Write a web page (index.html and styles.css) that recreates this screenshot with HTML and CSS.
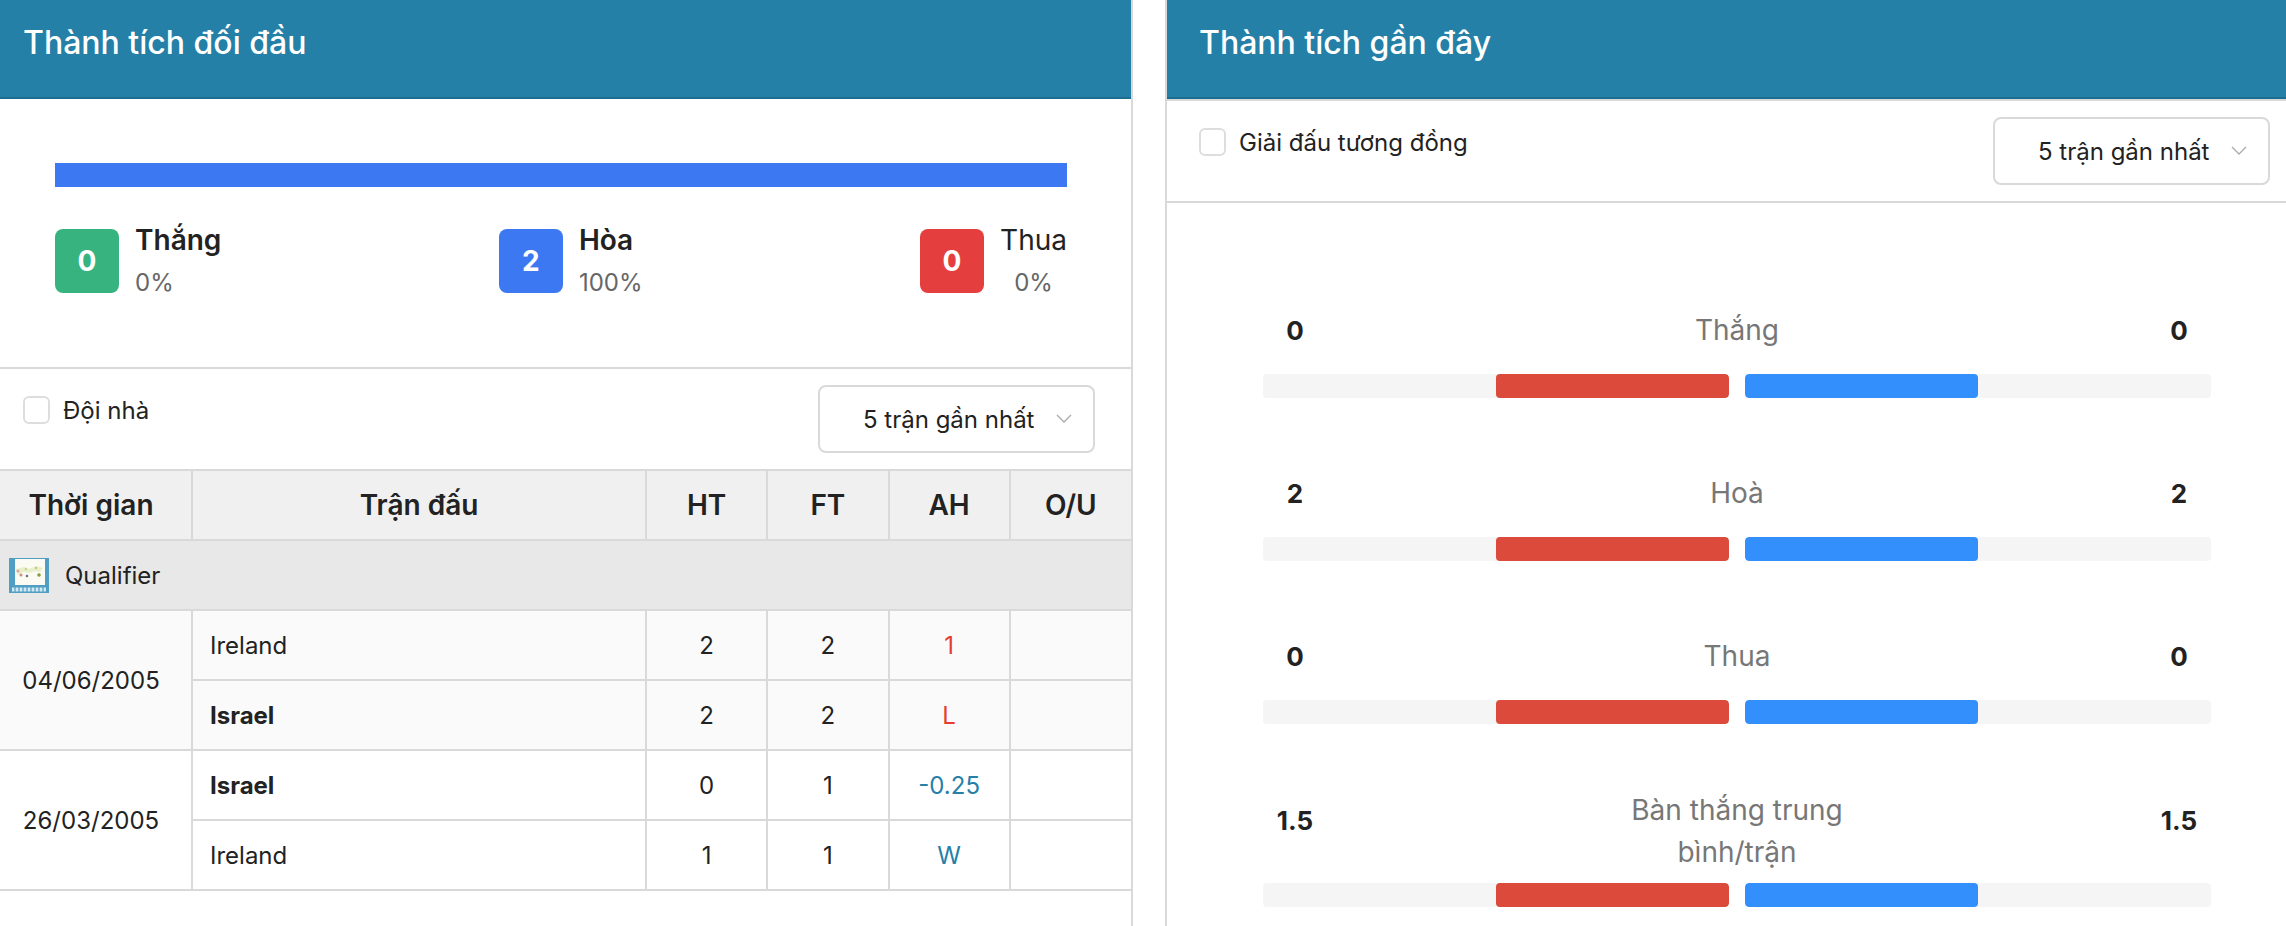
FILE: index.html
```html
<!DOCTYPE html>
<html lang="vi">
<head>
  <meta charset="UTF-8" />
  <meta name="viewport" content="width=device-width, initial-scale=1.0" />
  <title>Thành tích</title>
  <link rel="stylesheet" href="styles.css">
</head>
<body>
  <!-- Head to head -->
  <section class="panel panel-left">
    <h2 class="panel-title">Thành tích đối đầu</h2>
    <div class="summary">
      <div class="summary-bar"></div>
      <div class="summary-items">
        <div class="summary-item">
          <span class="badge badge-win">0</span>
          <div class="summary-text">
            <div class="summary-label">Thắng</div>
            <div class="summary-pct">0%</div>
          </div>
        </div>
        <div class="summary-item">
          <span class="badge badge-draw">2</span>
          <div class="summary-text">
            <div class="summary-label">Hòa</div>
            <div class="summary-pct">100%</div>
          </div>
        </div>
        <div class="summary-item">
          <span class="badge badge-loss">0</span>
          <div class="summary-text summary-text-center">
            <div class="summary-label summary-label-thin">Thua</div>
            <div class="summary-pct">0%</div>
          </div>
        </div>
      </div>
    </div>
    <div class="filters filters-left">
      <label class="check"><span class="check-box"></span>Đội nhà</label>
      <div class="select">
        <span>5 trận gần nhất</span>
        <svg class="chevron" viewBox="0 0 16 10" width="16" height="10"><path d="M1 1 L8 8 L15 1" fill="none" stroke="#aaa" stroke-width="1.3"/></svg>
      </div>
    </div>
    <table class="matches">
      <colgroup>
        <col class="col-date"><col class="col-team"><col class="col-num"><col class="col-num"><col class="col-num"><col class="col-num">
      </colgroup>
      <thead>
        <tr><th>Thời gian</th><th>Trận đấu</th><th>HT</th><th>FT</th><th>AH</th><th>O/U</th></tr>
      </thead>
      <tbody>
        <tr class="group-row">
          <td colspan="6">
            <div class="group">
              <svg class="league-icon" viewBox="0 0 40 35" width="40" height="35">
                <rect width="40" height="35" fill="#4f9fc4"/>
                <rect x="6" y="1" width="30" height="26" fill="#fbfbf4"/>
                <path d="M7 11 L15 9 L20 11 L27 8 L34 10 L31 14 L26 13 L21 15 L15 14 L9 17 Z" fill="#e9efc9"/>
                <circle cx="9" cy="13" r="1.6" fill="#d8a79a"/>
                <circle cx="12" cy="17" r="1.5" fill="#c98f84"/>
                <circle cx="17" cy="11" r="1.3" fill="#c7d79a"/>
                <circle cx="18" cy="18" r="1.3" fill="#5f7480"/>
                <circle cx="30" cy="17" r="1.8" fill="#7fa23a"/>
                <circle cx="27" cy="10" r="1.2" fill="#b9cc8a"/>
                <path d="M3 29.5h34v4h-34z" fill="#d5e8f2"/>
                <path d="M6 29v5M10 29v5M14 29v5M18 29v5M22 29v5M26 29v5M30 29v5M34 29v5" stroke="#4f9fc4" stroke-width="1.2"/>
              </svg>
              <span>Qualifier</span>
            </div>
          </td>
        </tr>
        <tr class="row-alt">
          <td class="date" rowspan="2">04/06/2005</td>
          <td class="team">Ireland</td><td>2</td><td>2</td><td class="ah-loss">1</td><td></td>
        </tr>
        <tr class="row-alt">
          <td class="team team-home">Israel</td><td>2</td><td>2</td><td class="ah-loss">L</td><td></td>
        </tr>
        <tr>
          <td class="date" rowspan="2">26/03/2005</td>
          <td class="team team-home">Israel</td><td>0</td><td>1</td><td class="ah-win">-0.25</td><td></td>
        </tr>
        <tr>
          <td class="team">Ireland</td><td>1</td><td>1</td><td class="ah-win">W</td><td></td>
        </tr>
      </tbody>
    </table>
  </section>

  <!-- Recent form -->
  <section class="panel panel-right">
    <h2 class="panel-title">Thành tích gần đây</h2>
    <div class="filters filters-right">
      <label class="check"><span class="check-box"></span>Giải đấu tương đồng</label>
      <div class="select">
        <span>5 trận gần nhất</span>
        <svg class="chevron" viewBox="0 0 16 10" width="16" height="10"><path d="M1 1 L8 8 L15 1" fill="none" stroke="#aaa" stroke-width="1.3"/></svg>
      </div>
    </div>
    <div class="stats">
      <div class="stat">
        <div class="stat-head"><span class="stat-val">0</span><span class="stat-label">Thắng</span><span class="stat-val">0</span></div>
        <div class="stat-bars">
          <div class="track track-home"><div class="fill fill-red"></div></div>
          <div class="track"><div class="fill fill-blue"></div></div>
        </div>
      </div>
      <div class="stat">
        <div class="stat-head"><span class="stat-val">2</span><span class="stat-label">Hoà</span><span class="stat-val">2</span></div>
        <div class="stat-bars">
          <div class="track track-home"><div class="fill fill-red"></div></div>
          <div class="track"><div class="fill fill-blue"></div></div>
        </div>
      </div>
      <div class="stat">
        <div class="stat-head"><span class="stat-val">0</span><span class="stat-label">Thua</span><span class="stat-val">0</span></div>
        <div class="stat-bars">
          <div class="track track-home"><div class="fill fill-red"></div></div>
          <div class="track"><div class="fill fill-blue"></div></div>
        </div>
      </div>
      <div class="stat stat-tall">
        <div class="stat-head"><span class="stat-val">1.5</span><span class="stat-label">Bàn thắng trung bình/trận</span><span class="stat-val">1.5</span></div>
        <div class="stat-bars">
          <div class="track track-home"><div class="fill fill-red"></div></div>
          <div class="track"><div class="fill fill-blue"></div></div>
        </div>
      </div>
    </div>
  </section>
</body>
</html>
```

FILE: styles.css
```css
* { box-sizing: border-box; }
html, body { height: 100%; }
body {
  margin: 0;
  display: flex;
  gap: 32px;
  overflow: hidden;
  background: #fff;
  color: #222;
  font-family: Inter, "Noto Sans", sans-serif;
  font-size: 24px;
}

.panel { min-height: 926px; }
.panel-left { width: 1133px; flex: none; border-right: 2px solid #d9d9d9; }
.panel-right { flex: 1; border-left: 2px solid #d9d9d9; }

.panel-title {
  margin: 0;
  height: 99px;
  padding: 24px 23px 0;
  background: #2580a8;
  border-bottom: 2px solid #1c6e90;
  color: #fff;
  font-size: 32px;
  font-weight: 500;
  line-height: 38px;
}
.panel-right .panel-title { padding-left: 32px; }

/* head to head summary */
.summary {
  height: 270px;
  padding: 64px 64px 0 55px;
  border-bottom: 2px solid #d9d9d9;
}
.summary-bar { height: 24px; background: #3b78f2; }
.summary-items { display: flex; justify-content: space-between; margin-top: 42px; }
.summary-item { display: flex; gap: 16px; }
.badge {
  width: 64px;
  height: 64px;
  border-radius: 8px;
  display: flex;
  align-items: center;
  justify-content: center;
  color: #fff;
  font-size: 28px;
  font-weight: 700;
}
.badge-win { background: #36b37e; }
.badge-draw { background: #3b78f2; }
.badge-loss { background: #e53e3e; }
.summary-text { display: flex; flex-direction: column; justify-content: space-between; }
.summary-text-center { text-align: center; }
.summary-label { font-size: 28px; font-weight: 600; line-height: 34px; margin-top: -6px; }
.summary-label-thin { font-weight: 400; }
.summary-pct { font-size: 24px; color: #666; line-height: 30px; margin-bottom: -5px; }

/* filter rows */
.filters { display: flex; justify-content: space-between; }
.filters-left { height: 100px; padding: 16px 36px 0 23px; }
.filters-right {
  height: 104px;
  padding: 16px 16px 0 32px;
  border-top: 2px solid #d9d9d9;
  border-bottom: 2px solid #d9d9d9;
}
.check { display: flex; align-items: center; gap: 13px; height: 28px; margin-top: 11px; }
.check-box {
  width: 27px;
  height: 28px;
  border: 2px solid #ddd;
  border-radius: 6px;
  background: #fff;
}
.select {
  width: 277px;
  height: 68px;
  padding: 0 21px 0 43px;
  border: 2px solid #d9d9d9;
  border-radius: 8px;
  display: flex;
  align-items: center;
  justify-content: space-between;
}
.chevron { flex: none; }

/* matches table */
.matches {
  width: 1131px;
  table-layout: fixed;
  border-collapse: collapse;
}
.col-date { width: 192px; }
.col-team { width: 454px; }
.col-num { width: 121.25px; }
.matches th, .matches td {
  height: 70px;
  padding: 0;
  border: 2px solid #d9d9d9;
  text-align: center;
}
.matches th:first-child, .matches td:first-child { border-left: none; }
.matches th:last-child, .matches td:last-child { border-right: none; }
.matches th { background: #f0f0f0; font-size: 28px; font-weight: 600; }
.matches th:first-child, .matches td.date { padding-right: 9px; }
.group-row td { background: #e8e8e8; }
.group { display: flex; align-items: center; gap: 16px; padding-left: 9px; }
.league-icon { flex: none; }
.row-alt td { background: #fafafa; }
.matches td.team { text-align: left; padding-left: 17px; }
.team-home { font-weight: 700; }
.ah-loss { color: #e53e2e; }
.ah-win { color: #2580a8; }

/* recent form stats */
.stats { padding: 96px 75px 0 96px; }
.stat { margin-bottom: 64px; }
.stat-head { display: flex; justify-content: space-between; align-items: center; height: 62px; margin-bottom: 13px; }
.stat-val { width: 64px; text-align: center; font-size: 26px; font-weight: 700; }
.stat-label { width: 240px; text-align: center; font-size: 28px; line-height: 42px; color: #777; }
.stat-bars { display: flex; gap: 16px; }
.track { flex: 1; height: 24px; border-radius: 4px; background: #f5f5f5; overflow: hidden; }
.track-home { display: flex; justify-content: flex-end; }
.fill { width: 50%; height: 100%; border-radius: 4px; }
.fill-red { background: #db4a3a; }
.fill-blue { background: #338ffb; }
.stat-tall { margin-top: 65px; }
.stat-tall .stat-head { height: 84px; margin-bottom: 10px; }
.stat-tall .stat-val { margin-bottom: 22px; }
```
